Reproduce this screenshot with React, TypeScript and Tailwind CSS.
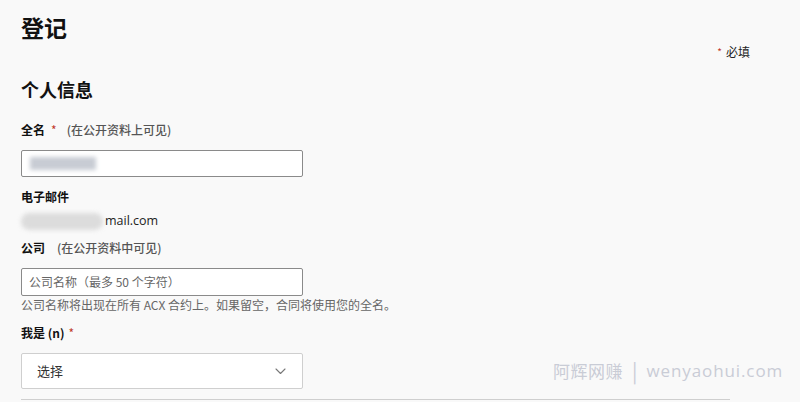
import React from "react";

const cjk = { fontFamily: '"Noto Sans CJK SC", "Open Sans", sans-serif' };

function Chevron() {
  return (
    <svg width="11" height="7" viewBox="0 0 11 7" fill="none">
      <path d="M1 1 L5.5 5.5 L10 1" stroke="#777" strokeWidth="1.1" strokeLinecap="round" strokeLinejoin="round" />
    </svg>
  );
}

export default function App() {
  return (
    <div className="relative w-[800px] h-[402px] overflow-hidden bg-[#f9f9f9] text-[#111]" style={cjk}>
      <div className="w-[730px] ml-[21px] pt-[10px]">
        <h1 className="text-[23px] font-bold leading-[34px] text-[#111]">登记</h1>
        <div className="flex justify-end items-center mt-[0px] pr-[1px] text-[12px] leading-[16px]">
          <span className="text-[#c0392b] text-[10px] mr-[4px]">*</span>
          <span className="text-[#222]">必填</span>
        </div>
        <h2 className="text-[18px] font-bold leading-[24px] mt-[17px]">个人信息</h2>

        <div className="mt-[21px] text-[12px] leading-[16px] flex items-center">
          <span className="font-bold">全名</span>
          <span className="text-[#c0392b] ml-[6px]">*</span>
          <span className="text-[#555] ml-[10px] font-medium">(在公开资料上可见)</span>
        </div>
        <div className="mt-[12px] w-[282px] h-[27px] border border-[#8a8a8a] rounded-[2px] bg-white flex items-center px-[8px]">
          <div className="w-[66px] h-[13px] bg-[#c8ccd4] blur-[2px]" />
        </div>

        <div className="mt-[12px] text-[12px] leading-[16px] font-bold">电子邮件</div>
        <div className="mt-[6px] flex items-center h-[20px]">
          <div className="w-[82px] h-[17px] rounded-full bg-[#dcdcdc] blur-[2px]" />
          <span className="text-[12.5px] text-[#222] ml-[2px]" style={{ fontFamily: '"Open Sans", sans-serif' }}>mail.com</span>
        </div>

        <div className="mt-[9px] text-[12px] leading-[16px] flex items-center">
          <span className="font-bold">公司</span>
          <span className="text-[#555] ml-[12px] font-medium">(在公开资料中可见)</span>
        </div>
        <div className="mt-[12px] w-[282px] h-[28px] border border-[#8a8a8a] rounded-[2px] bg-white flex items-center px-[7px]">
          <span className="text-[12px] text-[#666]">公司名称（最多 50 个字符）</span>
        </div>
        <div className="mt-[1px] text-[12px] leading-[16px] text-[#666]">公司名称将出现在所有 ACX 合约上。如果留空，合同将使用您的全名。</div>

        <div className="mt-[12px] text-[12px] leading-[16px] flex items-center">
          <span className="font-bold">我是 (n)</span>
          <span className="text-[#c0392b] ml-[4px]">*</span>
        </div>
        <div className="mt-[12px] w-[282px] h-[36px] border border-[#cfcfcf] rounded-[2px] bg-white flex items-center justify-between pl-[15px] pr-[16px]">
          <span className="text-[13px] text-[#333]">选择</span>
          <Chevron />
        </div>
        <div className="mt-[10px] w-[709px] h-px bg-[#cfcfcf]" />
      </div>

      <div className="absolute left-[553px] top-[359px] flex items-center text-[17px] text-[#c9ccd6] leading-[24px]">
        <span className="tracking-[0.5px]">阿辉网赚</span>
        <span className="mx-[9px] text-[20px]">|</span>
        <span style={{ fontFamily: '"Open Sans", sans-serif' }} className="tracking-[0.9px]">wenyaohui.com</span>
      </div>
    </div>
  );
}
